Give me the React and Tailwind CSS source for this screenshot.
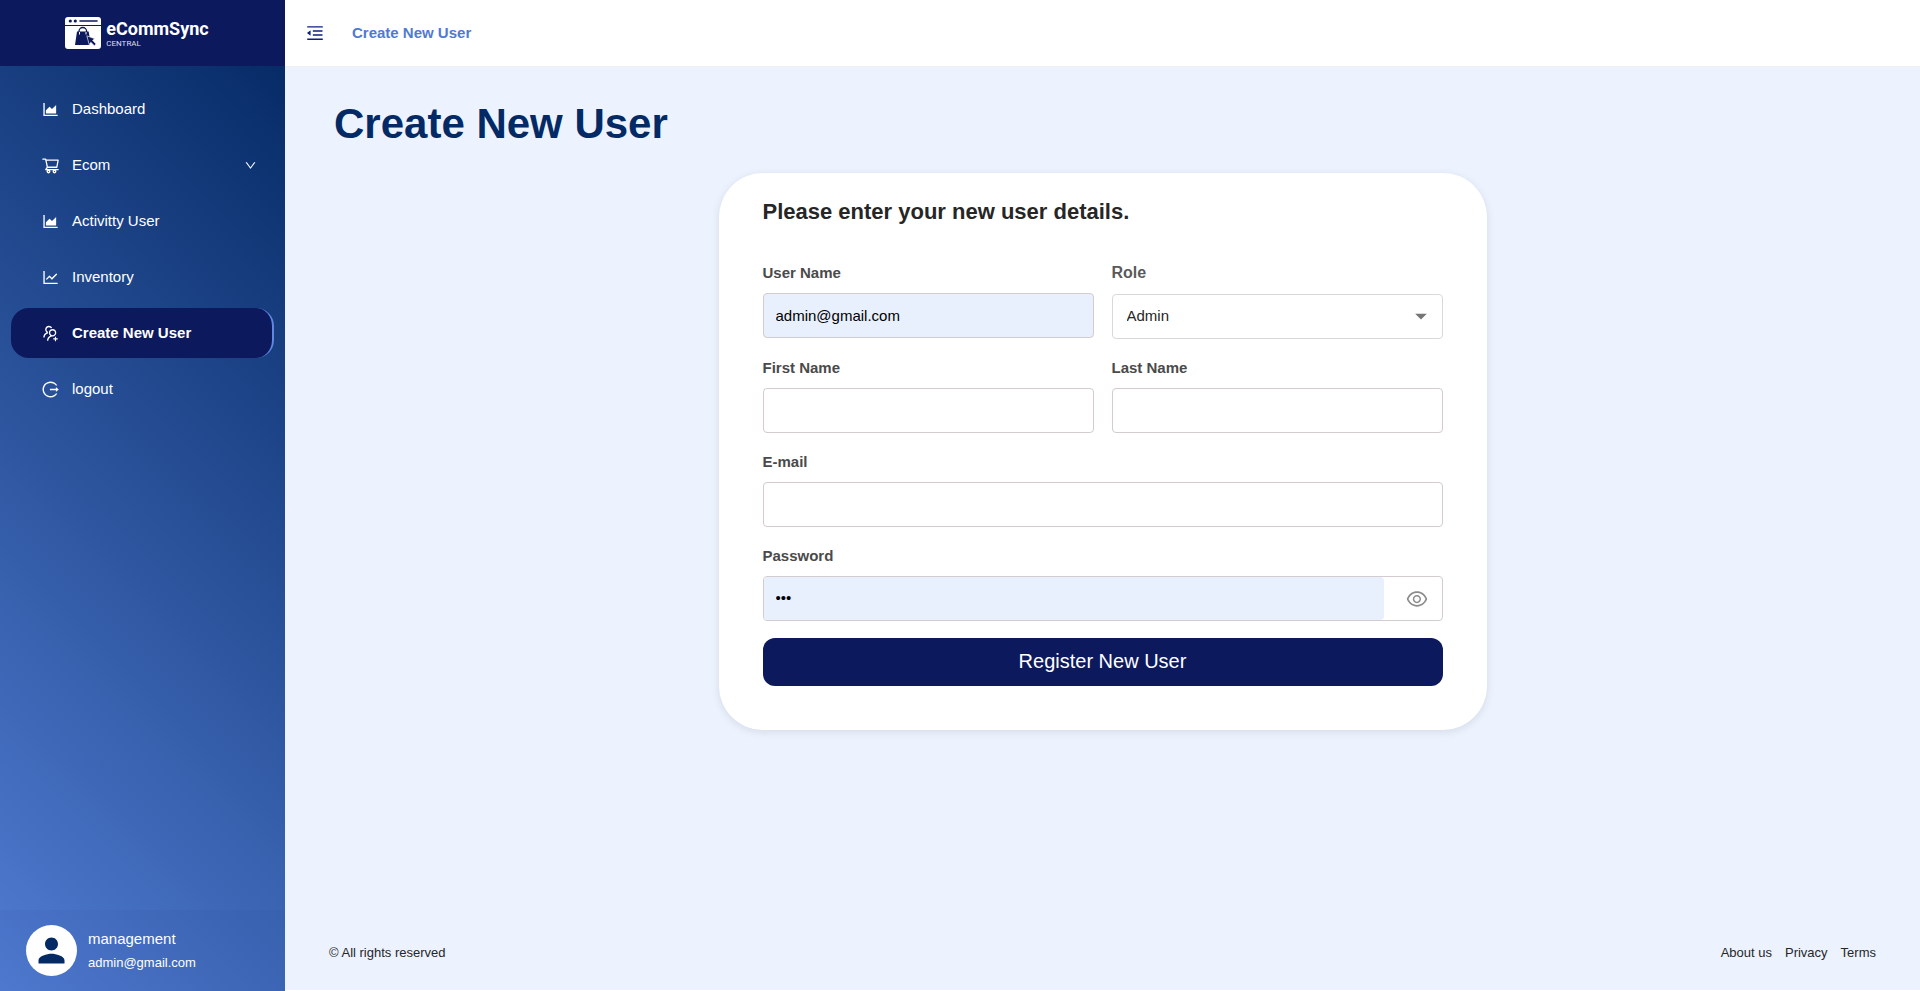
import React, { useState } from 'react';
import clsx from 'clsx';
import {
  AiOutlineAreaChart,
  AiOutlineDown,
  AiOutlineEye,
  AiOutlineEyeInvisible,
  AiOutlineLineChart,
  AiOutlineLogout,
  AiOutlineMenuFold,
  AiOutlineShoppingCart,
  AiOutlineUsergroupAdd
} from 'react-icons/ai';
import { MdArrowDropDown, MdPerson } from 'react-icons/md';

const menuItems = [
  { key: 'dashboard', label: 'Dashboard', icon: AiOutlineAreaChart },
  { key: 'ecom', label: 'Ecom', icon: AiOutlineShoppingCart, hasChildren: true },
  { key: 'activity', label: 'Activitty User', icon: AiOutlineAreaChart },
  { key: 'inventory', label: 'Inventory', icon: AiOutlineLineChart },
  { key: 'create-user', label: 'Create New User', icon: AiOutlineUsergroupAdd },
  { key: 'logout', label: 'logout', icon: AiOutlineLogout }
];

const inputClass = 'w-full h-[45px] px-3 rounded border border-[#d3cbcd] text-[15px] text-black outline-none focus:border-[#4f7acf]';

function Logo() {
  return (
    <div className="flex items-center gap-[5px] text-white">
      <svg width="36" height="32" viewBox="0 0 36 32" aria-hidden="true">
        <path fill="#fff" d="M3 0h30a3 3 0 0 1 3 3v5H0V3a3 3 0 0 1 3-3z" />
        <path fill="#fff" d="M0 9h36v20a3 3 0 0 1-3 3H3a3 3 0 0 1-3-3z" />
        <circle cx="5.3" cy="4" r="1.6" fill="#0c195c" />
        <circle cx="10.3" cy="4" r="1.6" fill="#0c195c" />
        <path stroke="#0c195c" strokeWidth="1.6" strokeLinecap="round" d="M15 4h17" />
        <path fill="#0c195c" d="M12 14.5h11.6l1 5.4-2.6-1 2.6 9.1H10z" />
        <path fill="none" stroke="#0c195c" strokeWidth="1.3" d="M14 15.5v-1.2a3.8 3.8 0 0 1 7.6 0v1.2" />
        <path stroke="#fff" strokeWidth="1" d="M14.5 15v2.5M21 15v2.5" />
        <path fill="#0c195c" stroke="#fff" strokeWidth="0.6" d="M21.8 18.8l8 3-2.2 1.5 3.4 3.6-1.6 1.8-3.6-3.4-1.6 2.2z" />
      </svg>
      <div className="flex flex-col font-['Roboto',sans-serif]">
        <span className="text-lg leading-5 font-bold">eCommSync</span>
        <span className="text-[8px] leading-[9px] text-[#dcdff0]">CENTRAL</span>
      </div>
    </div>
  );
}

function Sidebar({ active }) {
  return (
    <aside className="w-[285px] shrink-0 flex flex-col text-white bg-[linear-gradient(45deg,#517cd2,#022761)]">
      <div className="h-[66px] pr-[11px] flex items-center justify-center bg-[#0c195c]">
        <Logo />
      </div>

      <nav className="flex-1 flex flex-col gap-1.5 px-[11px] pt-[18px]">
        {menuItems.map(({ key, label, icon: Icon, hasChildren }) => (
          <a
            key={key}
            href={`#${key}`}
            className={clsx(
              'h-[50px] pl-[30px] pr-[17px] flex items-center gap-3 rounded-[18px] text-[15px]',
              key === active && 'bg-[#0c195c] border-r-2 border-[#5f88e2] font-bold'
            )}
          >
            <Icon size={19} />
            <span className="flex-1">{label}</span>
            {hasChildren && <AiOutlineDown size={13} />}
          </a>
        ))}
      </nav>

      <div className="h-[81px] pl-[26px] flex items-center gap-[11px] bg-[#0c195c]/4">
        <div className="w-[51px] h-[51px] rounded-full bg-white flex items-center justify-center">
          <MdPerson size={39} color="#042a66" />
        </div>
        <div className="flex flex-col">
          <span className="text-[15px] leading-6">management</span>
          <span className="text-[13px] leading-6">admin@gmail.com</span>
        </div>
      </div>
    </aside>
  );
}

function Field({ id, label, className, labelClass = 'text-[15px] text-[#4a4a4a]', children }) {
  return (
    <div className={clsx('flex flex-col', className)}>
      <label htmlFor={id} className={clsx('mb-2 leading-6 font-bold', labelClass)}>{label}</label>
      {children}
    </div>
  );
}

function UserForm() {
  const [form, setForm] = useState({
    userName: 'admin@gmail.com',
    role: 'Admin',
    firstName: '',
    lastName: '',
    email: '',
    password: '123'
  });
  const [showPassword, setShowPassword] = useState(false);

  const handleChange = (e) => setForm({ ...form, [e.target.id]: e.target.value });

  return (
    <form
      className="w-full max-w-3xl mx-auto px-11 pt-[23px] pb-11 rounded-[44px] bg-white shadow-[0_2px_8px_rgba(0,0,0,0.1)]"
      onSubmit={(e) => e.preventDefault()}
    >
      <h2 className="mb-[33px] text-[22px] leading-8 font-bold text-[#262626]">Please enter your new user details.</h2>

      <div className="grid grid-cols-2 gap-x-[18px] gap-y-[17px]">
        <Field id="userName" label="User Name">
          <input id="userName" type="text" value={form.userName} onChange={handleChange} className={clsx(inputClass, 'bg-[#e8f0fe]')} />
        </Field>
        <Field id="role" label="Role" labelClass="text-base text-[#5a5a5a]">
          <div className="relative mt-px">
            <select
              id="role"
              value={form.role}
              onChange={handleChange}
              className="block w-full h-[45px] px-3.5 rounded border border-[#d9d9d9] bg-white appearance-none text-[15px] text-[#262626] outline-none"
            >
              <option>Admin</option>
              <option>User</option>
            </select>
            <MdArrowDropDown size={28} className="absolute right-2 top-2 text-[#757575] pointer-events-none" />
          </div>
        </Field>
        <Field id="firstName" label="First Name">
          <input id="firstName" type="text" value={form.firstName} onChange={handleChange} className={inputClass} />
        </Field>
        <Field id="lastName" label="Last Name">
          <input id="lastName" type="text" value={form.lastName} onChange={handleChange} className={inputClass} />
        </Field>
        <Field id="email" label="E-mail" className="col-span-2">
          <input id="email" type="email" value={form.email} onChange={handleChange} className={inputClass} />
        </Field>
        <Field id="password" label="Password" className="col-span-2">
          <div className="h-[45px] flex rounded border border-[#d3cbcd] overflow-hidden">
            <input
              id="password"
              type={showPassword ? 'text' : 'password'}
              value={form.password}
              onChange={handleChange}
              className="flex-1 min-w-0 px-3 rounded-r-sm bg-[#e8f0fe] text-[15px] text-black outline-none"
            />
            <button
              type="button"
              aria-label="Show password"
              className="w-[58px] pl-2 flex items-center justify-center text-[#8c8c8c]"
              onClick={() => setShowPassword(!showPassword)}
            >
              {showPassword ? <AiOutlineEyeInvisible size={24} /> : <AiOutlineEye size={24} />}
            </button>
          </div>
        </Field>
        <button type="submit" className="col-span-2 h-12 pb-0.5 rounded-xl bg-[#0c195c] text-xl text-white hover:bg-[#16267a]">
          Register New User
        </button>
      </div>
    </form>
  );
}

export default function App() {
  return (
    <div className="min-h-screen flex bg-white font-['Liberation_Sans',Arial,sans-serif]">
      <Sidebar active="create-user" />

      <div className="flex-1 min-w-0 flex flex-col pb-px">
        <header className="h-[67px] pl-5 flex items-center gap-[27px] border-b border-[#f0f0f0]">
          <button type="button" aria-label="Collapse menu" className="text-[#0c1f7c]">
            <AiOutlineMenuFold size={20} />
          </button>
          <span className="text-[15px] font-bold text-[#4f7acf]">Create New User</span>
        </header>

        <main className="flex-1 flex flex-col px-11 bg-[#ecf3ff]">
          <h1 className="pl-[5px] mt-[29px] mb-[21px] text-[42px] leading-14 font-bold text-[#042a66]">Create New User</h1>
          <UserForm />

          <footer className="mt-auto pb-[27px] flex justify-between text-[13px] leading-5 text-[#262626]">
            <span>© All rights reserved</span>
            <div className="flex gap-[13px]">
              <a href="#about">About us</a>
              <a href="#privacy">Privacy</a>
              <a href="#terms">Terms</a>
            </div>
          </footer>
        </main>
      </div>
    </div>
  );
}
